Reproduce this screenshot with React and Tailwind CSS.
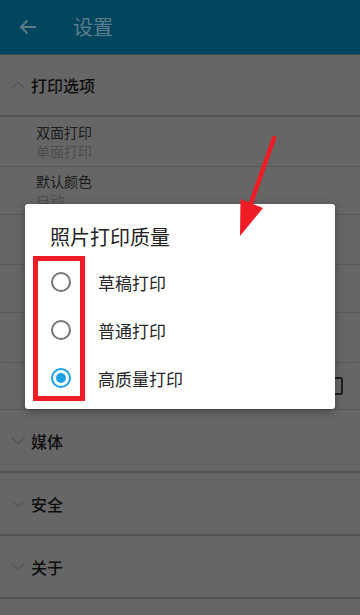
import React from "react";

const font = { fontFamily: '"Noto Sans CJK SC", "Noto Sans", sans-serif' };

function ChevronUp() {
  return (
    <svg width="14" height="8" viewBox="0 0 14 8" className="shrink-0">
      <path d="M1 7 L7 1.5 L13 7" fill="none" stroke="#555555" strokeWidth="1.3" />
    </svg>
  );
}
function ChevronDown() {
  return (
    <svg width="14" height="8" viewBox="0 0 14 8" className="shrink-0">
      <path d="M1 1 L7 6.5 L13 1" fill="none" stroke="#555555" strokeWidth="1.3" />
    </svg>
  );
}

function Section({ title, up, h }) {
  return (
    <div className={`flex items-center pl-[11px] gap-[6px] border-b-2 border-[#535353] ${h}`}>
      {up ? <ChevronUp /> : <ChevronDown />}
      <span className="text-[16px] font-medium text-[#0e0e0e] leading-none">{title}</span>
    </div>
  );
}

function Row({ title, sub, h, right }) {
  return (
    <div className={`flex items-center justify-between pl-[36px] pr-[17px] border-b border-[#595959] ${h}`}>
      <div className="flex flex-col">
        {title && <span className="text-[14px] leading-[19px] text-[#1c1c1c]">{title}</span>}
        {sub && <span className="text-[14px] leading-[19px] text-[#4d4d4d]">{sub}</span>}
      </div>
      {right}
    </div>
  );
}

function Radio({ checked }) {
  return (
    <svg width="22" height="22" viewBox="0 0 22 22" className="shrink-0">
      <circle cx="11" cy="11" r="9" fill="none" stroke={checked ? "#1ba1e6" : "#757575"} strokeWidth="2" />
      {checked && <circle cx="11" cy="11" r="5" fill="#1ba1e6" />}
    </svg>
  );
}

export default function App() {
  return (
    <div className="relative w-[360px] h-[615px] overflow-hidden bg-[#666666]" style={font}>
      <div className="h-[55px] bg-[#01465e] flex items-center border-b border-[#3a4a50]">
        <svg width="18" height="16" viewBox="0 0 18 16" className="ml-[19px]">
          <path d="M17 8 H2 M8.5 1.5 L2 8 L8.5 14.5" fill="none" stroke="#5a7b87" strokeWidth="2" />
        </svg>
        <span className="ml-[36px] text-[20px] text-[#5b7d8a] leading-none">设置</span>
      </div>
      <Section title="打印选项" up h="h-[62px]" />
      <Row title="双面打印" sub="单面打印" h="h-[50px]" />
      <Row title="默认颜色" sub="自动" h="h-[48px]" />
      <Row h="h-[50px]" />
      <Row h="h-[48px]" />
      <Row h="h-[50px]" />
      <Row
        h="h-[47px]"
        right={<div className="w-[18px] h-[18px] border-2 border-[#1e1e1e] rounded-[2px]" />}
      />
      <Section title="媒体" h="h-[63px]" />
      <Section title="安全" h="h-[63px]" />
      <Section title="关于" h="h-[63px]" />

      {/* Dialog */}
      <div className="absolute left-[25px] top-[204px] w-[310px] h-[205px] bg-white rounded-[3px] shadow-[0_2px_8px_rgba(0,0,0,0.35)] flex flex-col">
        <div className="pl-[25px] pt-[21px] h-[54px] text-[20px] leading-[24px] text-[#212121]">照片打印质量</div>
        {[
          ["草稿打印", false],
          ["普通打印", false],
          ["高质量打印", true],
        ].map(([t, c]) => (
          <div key={t} className="h-[48px] flex items-center pl-[25px]">
            <Radio checked={c} />
            <span className="ml-[26px] text-[17px] text-[#262626] leading-none">{t}</span>
          </div>
        ))}
      </div>

      {/* Red highlight box */}
      <div className="absolute left-[33px] top-[256px] w-[52px] h-[145px] border-[5px] border-[#ee1c25]" />

      {/* Red arrow */}
      <svg className="absolute left-0 top-0 pointer-events-none" width="360" height="615" viewBox="0 0 360 615">
        <path d="M274 138 L251 203" stroke="#ee1c25" strokeWidth="4.5" strokeLinecap="round" fill="none" />
        <polygon points="240.5,199 263,208 240,236" fill="#ee1c25" />
      </svg>
    </div>
  );
}
